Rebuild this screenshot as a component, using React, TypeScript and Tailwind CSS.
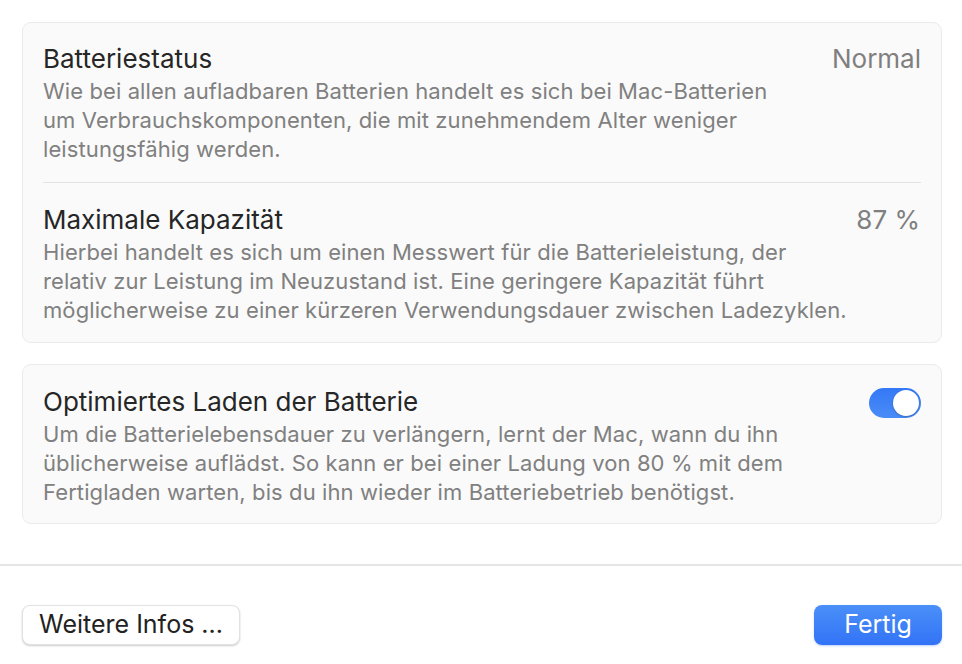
import React, { useState } from "react";

function Row({ title, value, children }: { title: string; value?: React.ReactNode; children: React.ReactNode }) {
  return (
    <div className="flex items-start justify-between">
      <div>
        <div className="text-[26px] leading-[36px] text-[#262626] whitespace-nowrap">{title}</div>
        <p className="text-[22px] leading-[29px] tracking-[0.1px] text-[#808080] whitespace-nowrap">{children}</p>
      </div>
      <div className="shrink-0 whitespace-nowrap">{value}</div>
    </div>
  );
}

export default function App() {
  const [optimized, setOptimized] = useState(true);

  return (
    <div className="w-[962px] h-[664px] bg-white flex flex-col font-['Inter',sans-serif]">
      <div className="pl-[22px] pr-[20px] pt-[22px] flex flex-col gap-[21px]">
        <div className="rounded-[9px] border border-[#ebebeb] bg-[#fafafa] px-[20px] pt-[18px] pb-[17px]">
          <Row title="Batteriestatus" value={<span className="text-[26px] leading-[36px] text-[#7f7f7f]">Normal</span>}>
            Wie bei allen aufladbaren Batterien handelt es sich bei Mac-Batterien
            <br />
            um Verbrauchskomponenten, die mit zunehmendem Alter weniger
            <br />
            leistungsfähig werden.
          </Row>
          <div className="mt-[18px] mb-[19px] h-px bg-[#e3e3e3]" />
          <Row title="Maximale Kapazität" value={<span className="text-[26px] leading-[36px] text-[#7f7f7f] mr-px">87 %</span>}>
            Hierbei handelt es sich um einen Messwert für die Batterieleistung, der
            <br />
            relativ zur Leistung im Neuzustand ist. Eine geringere Kapazität führt
            <br />
            möglicherweise zu einer kürzeren Verwendungsdauer zwischen Ladezyklen.
          </Row>
        </div>

        <div className="rounded-[9px] border border-[#ebebeb] bg-[#fafafa] px-[20px] pt-[19px] pb-[16px]">
          <Row
            title="Optimiertes Laden der Batterie"
            value={
              <button
                type="button"
                onClick={() => setOptimized((v) => !v)}
                className={`mt-[4px] w-[52px] h-[30px] rounded-full p-[2px] flex ${
                  optimized ? "bg-gradient-to-b from-[#3478f6] to-[#4a8cf7] justify-end" : "bg-[#e0e0e0] justify-start"
                }`}
              >
                <span className="w-[26px] h-[26px] rounded-full bg-white shadow-[0_1px_2px_rgba(0,0,0,0.25)]" />
              </button>
            }
          >
            Um die Batterielebensdauer zu verlängern, lernt der Mac, wann du ihn
            <br />
            üblicherweise auflädst. So kann er bei einer Ladung von 80 % mit dem
            <br />
            Fertigladen warten, bis du ihn wieder im Batteriebetrieb benötigst.
          </Row>
        </div>
      </div>

      <div className="mt-[40px] h-[2px] shrink-0 bg-[#e6e6e6]" />

      <div className="flex justify-between pl-[22px] pr-[20px] pt-[39px]">
        <button
          type="button"
          className="h-[40px] w-[218px] rounded-[8px] bg-white border border-[#e2e2e2] shadow-[0_1px_2px_rgba(0,0,0,0.2)] text-[25px] text-[#222]"
        >
          Weitere Infos ...
        </button>
        <button
          type="button"
          className="h-[40px] w-[128px] rounded-[8px] bg-gradient-to-b from-[#4b8ff8] to-[#3273f6] shadow-[0_1px_2px_rgba(40,100,240,0.3)] text-[25px] text-white"
        >
          Fertig
        </button>
      </div>
    </div>
  );
}
